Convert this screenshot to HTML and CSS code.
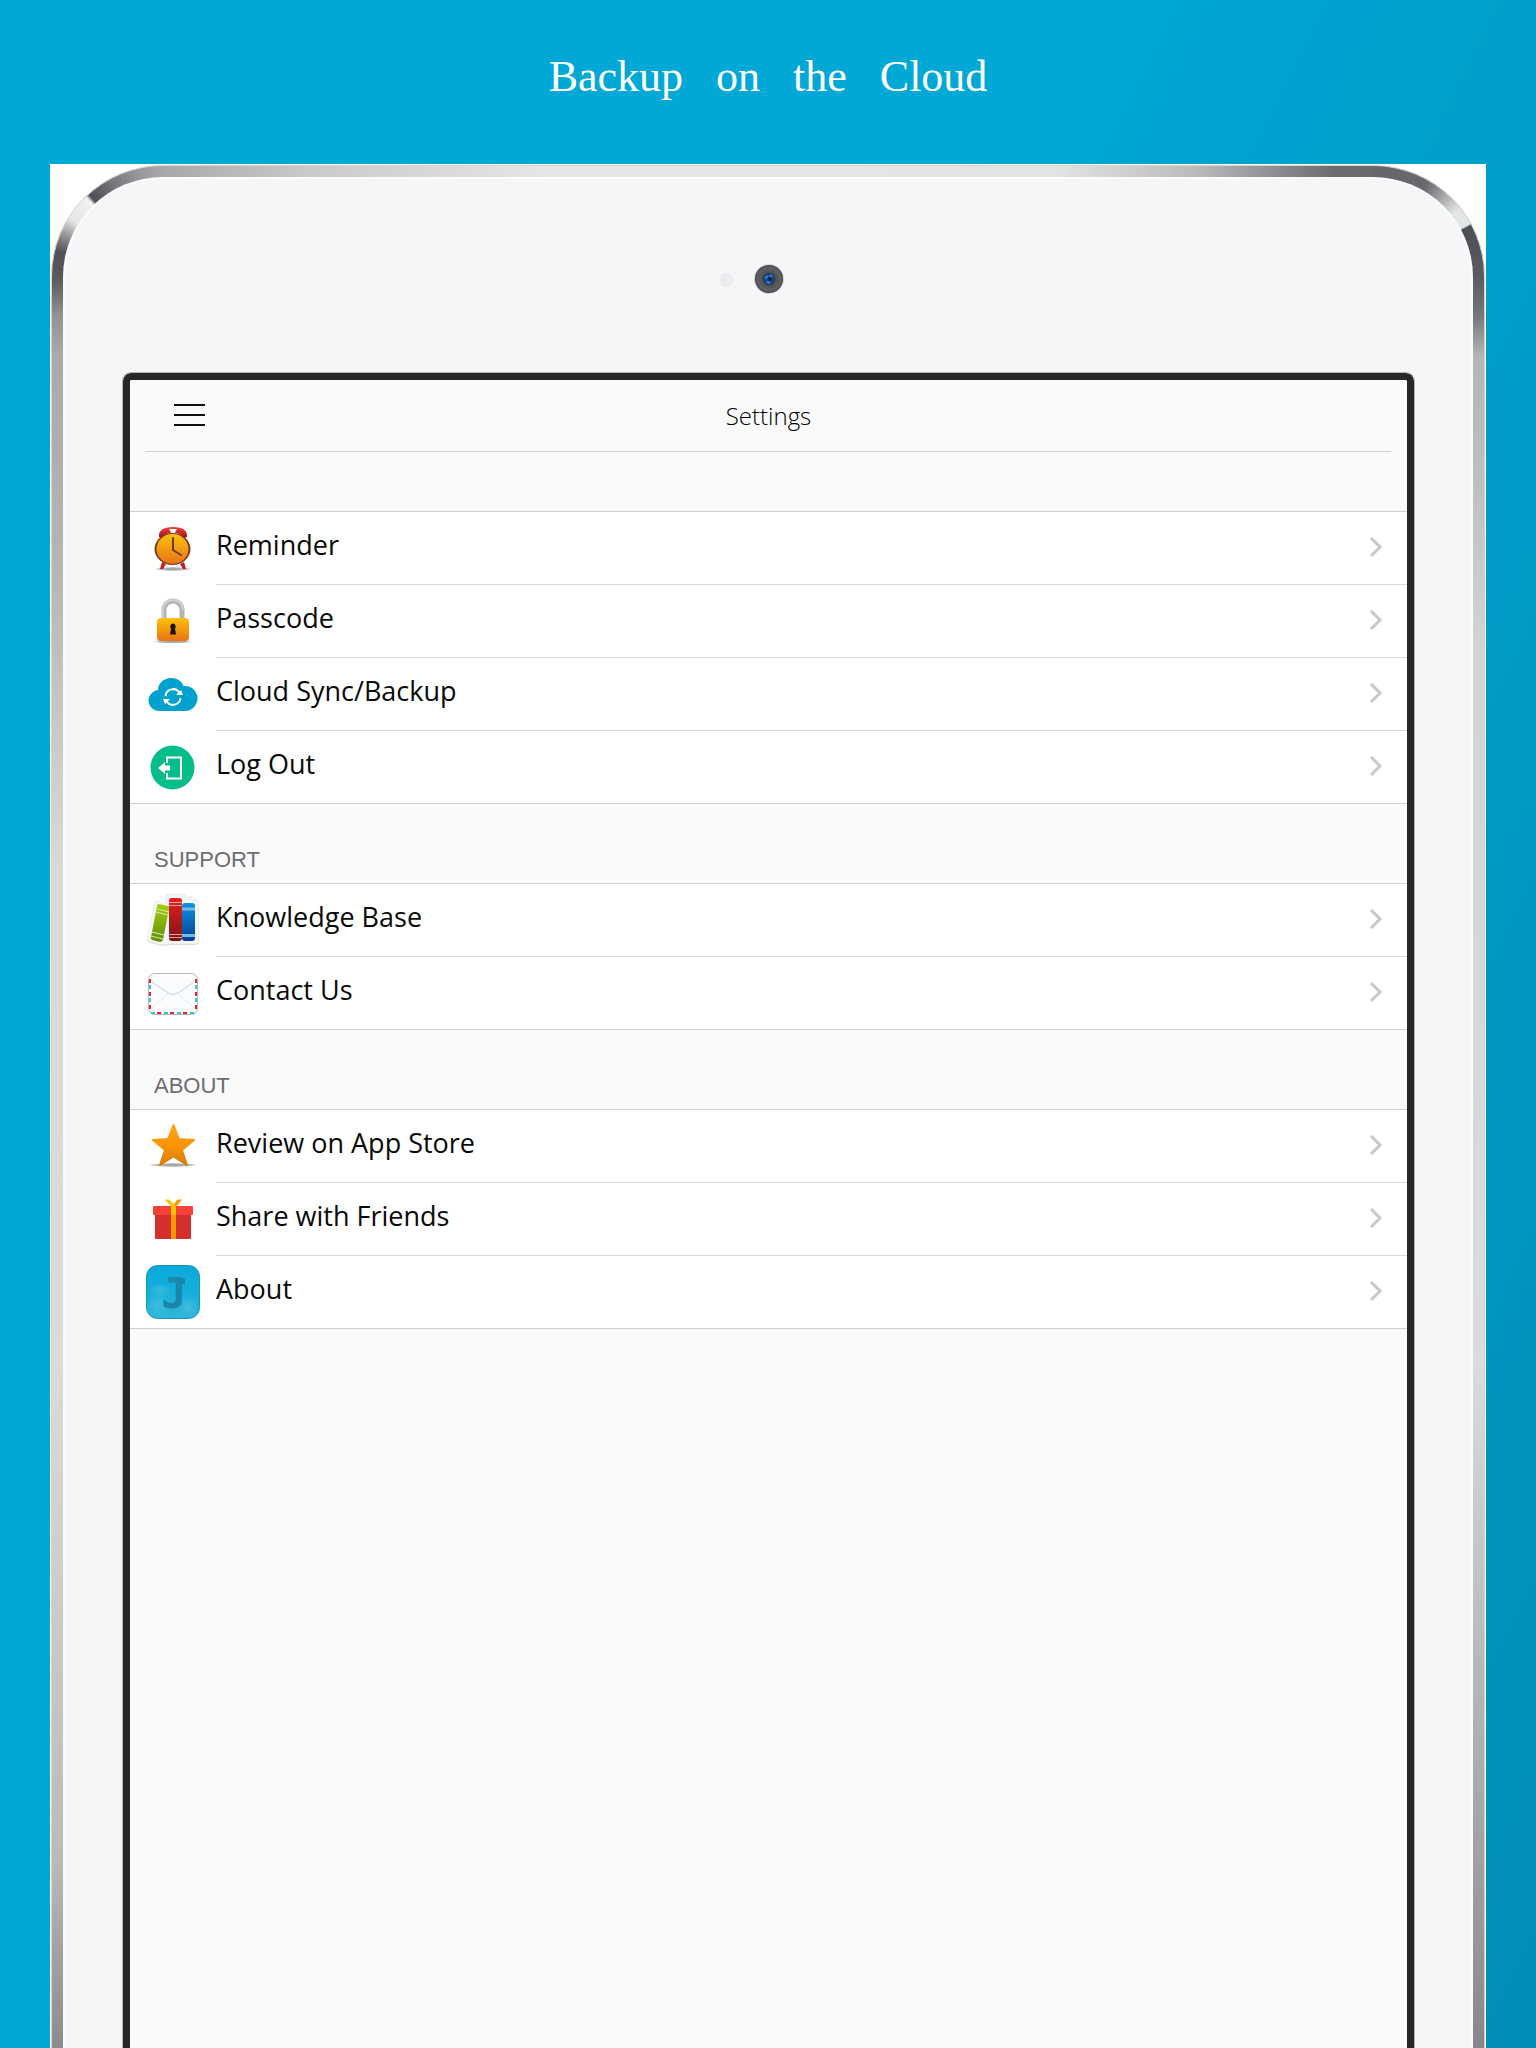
FILE: index.html
```html
<!DOCTYPE html>
<html lang="en">
<head>
<meta charset="utf-8">
<meta name="viewport" content="width=device-width, initial-scale=1">
<title>Backup on the Cloud</title>
<link rel="stylesheet" href="styles.css">
</head>
<body>
<h1 class="headline">Backup   on   the   Cloud</h1>
<div class="stage">
<div class="device">
<div class="face">
  <div class="forehead">
    <svg class="camera" viewBox="0 0 120 32" aria-hidden="true">
      <defs>
        <radialGradient id="lens"><stop offset="0" stop-color="#0a2a4a"/><stop offset=".2" stop-color="#0b58b8"/><stop offset=".36" stop-color="#26364f"/><stop offset=".5" stop-color="#505256"/><stop offset=".85" stop-color="#606164"/><stop offset="1" stop-color="#3e3f42"/></radialGradient>
      </defs>
      <circle cx="17" cy="17" r="7" fill="#e9eaec"/>
      <path d="M12 14h10M11 17h12M12 20h10" stroke="#f3f4f5" stroke-dasharray="2 2"/>
      <circle cx="60" cy="16" r="15" fill="#d4d5d7"/>
      <circle cx="60" cy="16" r="14" fill="url(#lens)"/>
      <path d="M56 15l3-2M61 12l2 2M58 19l3 1" stroke="#1f8bf0" stroke-width="2"/>
      <circle cx="61" cy="16" r="2" fill="#062038"/>
    </svg>
  </div>
  <main class="screen">
    <header class="bar">
      <button class="menu" type="button" aria-label="Menu">
        <svg width="31" height="24" viewBox="0 0 31 24" aria-hidden="true"><path d="M0 2h31M0 12h31M0 22h31" stroke="#111" stroke-width="2"/></svg>
      </button>
      <h2 class="title">Settings</h2>
    </header>

    <ul class="list list-first">
      <li><a class="row" href="#reminder">
        <svg class="icon" viewBox="0 0 60 72" aria-hidden="true">
          <defs>
            <linearGradient id="gold" x2="0" y2="1"><stop offset="0" stop-color="#fbc20a"/><stop offset="1" stop-color="#ea7317"/></linearGradient>
            <linearGradient id="bell" x2="0" y2="1"><stop offset="0" stop-color="#e8453c"/><stop offset="1" stop-color="#a80f12"/></linearGradient>
            <radialGradient id="ground"><stop offset="0" stop-color="#9a9a9a"/><stop offset=".7" stop-color="#b9b9b9"/><stop offset="1" stop-color="#fff"/></radialGradient>
          </defs>
          <ellipse cx="30" cy="57" rx="19" ry="2" fill="url(#ground)"/>
          <path d="M19 50l4 2-3 5h-3zM41 50l-4 2 3 5h3z" fill="#c81d1f"/>
          <path d="M16 25c-1-6 4-10 14-10s15 4 14 10l-3 1c-2-3-6-5-9-5l1-4h-6l1 4c-3 0-7 2-9 5z" fill="url(#bell)"/>
          <path d="M26 17h8l-3 4v2h-2v-2z" fill="#fff"/>
          <ellipse cx="29.500" cy="37" rx="18" ry="16" fill="#77392a"/>
          <ellipse cx="29.500" cy="37" rx="16" ry="15" fill="url(#gold)"/>
          <path d="M30 26v12l8 5" fill="none" stroke="#713b22" stroke-width="2" stroke-linecap="round" stroke-linejoin="round"/>
        </svg>
        <span class="cell"><span class="label">Reminder</span><svg class="chevron" viewBox="0 0 14 22" aria-hidden="true"><path d="M2 1l9 9-9 9"/></svg></span></a></li>
      <li><a class="row" href="#passcode">
        <svg class="icon" viewBox="0 0 60 72" aria-hidden="true">
          <ellipse cx="30" cy="56.500" rx="20" ry="2" fill="url(#ground)"/>
          <path d="M21 34v-9a9 9 0 0 1 18 0v9" fill="none" stroke="#b3b4b5" stroke-width="5"/>
          <path d="M20 33v-8a10 10 0 0 1 20 0" fill="none" stroke="#cdcecf" stroke-width="2"/>
          <rect x="14" y="33" width="32" height="23" rx="4" fill="url(#gold)"/>
          <path d="M30 38.500a3 3 0 0 1 2 5l1 6h-6l1-6a3 3 0 0 1 2-5z" fill="#1d1208"/>
        </svg>
        <span class="cell"><span class="label">Passcode</span><svg class="chevron" viewBox="0 0 14 22" aria-hidden="true"><path d="M2 1l9 9-9 9"/></svg></span></a></li>
      <li><a class="row" href="#sync">
        <svg class="icon" viewBox="0 0 60 72" aria-hidden="true">
          <path d="M17 53C10 53 5.500 48 5.500 42.500c0-5 4-9.500 9.500-10.500 0-7 6-12 13-12 6 0 11 3 12.500 8C48 27 54.500 33 54.500 40S49 53 42 53z" fill="#02a2d0"/>
          <path d="M22.500 38a7.500 7.500 0 0 1 14-3M37.500 40a7.500 7.500 0 0 1-14 3" fill="none" stroke="#fff" stroke-width="2"/>
          <path d="M33 37h7l-2-5zM27 41h-7l2 5z" fill="#fff"/>
        </svg>
        <span class="cell"><span class="label">Cloud Sync/Backup</span><svg class="chevron" viewBox="0 0 14 22" aria-hidden="true"><path d="M2 1l9 9-9 9"/></svg></span></a></li>
      <li><a class="row" href="#logout">
        <svg class="icon" viewBox="0 0 60 72" aria-hidden="true">
          <circle cx="29.500" cy="36.500" r="22" fill="#05bd8b"/>
          <path d="M24 32v-5.500h14v21H24V42" fill="none" stroke="#fff" stroke-width="2"/>
          <path d="M15 37l7-6v3.500h5v5h-5V43z" fill="#fff"/>
        </svg>
        <span class="cell"><span class="label">Log Out</span><svg class="chevron" viewBox="0 0 14 22" aria-hidden="true"><path d="M2 1l9 9-9 9"/></svg></span></a></li>
    </ul>

    <h3 class="group">SUPPORT</h3>
    <ul class="list">
      <li><a class="row" href="#knowledge">
        <svg class="icon" viewBox="0 0 60 72" aria-hidden="true">
          <defs>
            <linearGradient id="green" x2="0" y2="1"><stop offset="0" stop-color="#a6ce10"/><stop offset="1" stop-color="#5e8f0c"/></linearGradient>
            <linearGradient id="red" x2="0" y2="1"><stop offset="0" stop-color="#e51f1d"/><stop offset="1" stop-color="#7d1517"/></linearGradient>
            <linearGradient id="blue" x2="0" y2="1"><stop offset="0" stop-color="#0b93e2"/><stop offset="1" stop-color="#073f94"/></linearGradient>
          </defs>
          <g stroke-linejoin="round">
            <path d="M15 21l11 3V14h13v5h13v38H26l-7 1-11-3z" fill="#dedede" stroke="#dedede" stroke-width="8"/>
            <path d="M15 21l11 3V14h13v5h13v37H26l-7 1-11-3z" fill="#f7f7f7" stroke="#f7f7f7" stroke-width="7"/>
          </g>
          <path d="M16 20l9 2q2 1 1 3l-6 31q-1 2-3 2l-8-2q-2-1-1-3l6-31q0-2 2-2z" fill="url(#green)"/>
          <path d="M14 25l12 3M13 28l12 3M9 48l12 3M8 52l12 3" stroke="#dcecaa"/>
          <rect x="26" y="14" width="13" height="43" rx="3" fill="url(#red)"/>
          <path d="M26 18.500h13M26 21.500h13M26 50.500h13M26 53.500h13" stroke="#f0a5a0"/>
          <rect x="39" y="19" width="13" height="38" rx="3" fill="url(#blue)"/>
          <path d="M39 25h13M39 51.500h13" stroke="#7bb8e6" stroke-width="3"/>
        </svg>
        <span class="cell"><span class="label">Knowledge Base</span><svg class="chevron" viewBox="0 0 14 22" aria-hidden="true"><path d="M2 1l9 9-9 9"/></svg></span></a></li>
      <li><a class="row" href="#contact">
        <svg class="icon" viewBox="0 0 60 72" aria-hidden="true">
          <rect x="5.500" y="16.500" width="49" height="41" rx="6" fill="#fafcfd" stroke="#b4b6b8"/>
          <path d="M7 22v31M53 22v31" stroke="#e3242b" stroke-width="2" stroke-dasharray="4 9"/>
          <path d="M7 28v26M53 28v26" stroke="#3cbfe6" stroke-width="2" stroke-dasharray="4 9"/>
          <path d="M14 56h36" stroke="#e3242b" stroke-width="2" stroke-dasharray="4 9"/>
          <path d="M8 56h46" stroke="#3cbfe6" stroke-width="2" stroke-dasharray="4 9"/>
          <path d="M9 51l16-14M51 51L35 37" stroke="#e3e8ea"/>
          <path d="M9 25l16 11q5 3 10 0l16-11" fill="none" stroke="#c9ced0"/>
        </svg>
        <span class="cell"><span class="label">Contact Us</span><svg class="chevron" viewBox="0 0 14 22" aria-hidden="true"><path d="M2 1l9 9-9 9"/></svg></span></a></li>
    </ul>

    <h3 class="group">ABOUT</h3>
    <ul class="list">
      <li><a class="row" href="#review">
        <svg class="icon" viewBox="0 0 60 72" aria-hidden="true">
          <defs><linearGradient id="star" x2="0" y2="1"><stop offset="0" stop-color="#ffa517"/><stop offset=".5" stop-color="#fb9507"/><stop offset="1" stop-color="#d97d06"/></linearGradient></defs>
          <ellipse cx="30" cy="55" rx="25" ry="2" fill="url(#ground)"/>
          <path d="M30.500 15l5.500 14 15 1-12 10 5 15-13.500-8.500L17 55l5-15-12-10 15-1z" fill="url(#star)" stroke="url(#star)" stroke-width="2" stroke-linejoin="round"/>
        </svg>
        <span class="cell"><span class="label">Review on App Store</span><svg class="chevron" viewBox="0 0 14 22" aria-hidden="true"><path d="M2 1l9 9-9 9"/></svg></span></a></li>
      <li><a class="row" href="#share">
        <svg class="icon" viewBox="0 0 60 72" aria-hidden="true">
          <rect x="12" y="31" width="36" height="25" rx="1" fill="#d32f2f"/>
          <rect x="10" y="23" width="40" height="9" rx="1" fill="#f44336"/>
          <path d="M28 32h5v24h-5z" fill="#ff9800"/>
          <path d="M28 22h5v10h-5z" fill="#ffc107"/>
          <path d="M22 16.500h4l6 6-3 2z" fill="#ffc107"/>
          <path d="M34.500 16.500H39L33 24l-2-3z" fill="#ff9800"/>
        </svg>
        <span class="cell"><span class="label">Share with Friends</span><svg class="chevron" viewBox="0 0 14 22" aria-hidden="true"><path d="M2 1l9 9-9 9"/></svg></span></a></li>
      <li><a class="row" href="#about">
        <svg class="icon" viewBox="0 0 60 72" aria-hidden="true">
          <defs>
            <linearGradient id="tile" x2="0" y2="1"><stop offset="0" stop-color="#0aa9dc"/><stop offset=".55" stop-color="#17afdb"/><stop offset="1" stop-color="#31b6da"/></linearGradient>
            <radialGradient id="haze"><stop offset="0" stop-color="#5cc8e2" stop-opacity=".5"/><stop offset="1" stop-color="#5cc8e2" stop-opacity="0"/></radialGradient>
          </defs>
          <rect x="3.500" y="9.500" width="53" height="53" rx="11" fill="url(#tile)" stroke="#1993bb"/>
          <ellipse cx="15" cy="48" rx="11" ry="13" fill="url(#haze)"/>
          <ellipse cx="45" cy="51" rx="10" ry="10" fill="url(#haze)"/>
          <ellipse cx="17" cy="34" rx="12" ry="7" fill="url(#haze)"/>
          <path d="M34 22h8v6h-8z" fill="#1a86a9"/>
          <text class="glyph" x="31" y="52" text-anchor="middle">J</text>
        </svg>
        <span class="cell"><span class="label">About</span><svg class="chevron" viewBox="0 0 14 22" aria-hidden="true"><path d="M2 1l9 9-9 9"/></svg></span></a></li>
    </ul>
  </main>
</div>
</div>
</div>
</body>
</html>
```
FILE: styles.css
```css
* { box-sizing: border-box; }

body {
  margin: 0;
  min-height: 100vh;
  display: flex;
  flex-direction: column;
  background: linear-gradient(116deg, #00a8d6 41%, #008eb6);
  font-family: "Open Sans", "Noto Sans", sans-serif;
  color: #0a0a0a;
}

.headline {
  margin: 0;
  height: 164px;
  padding-top: 52px;
  font: 400 44px/50px "Liberation Serif", serif;
  color: #fff;
  text-align: center;
  white-space: pre-wrap;
}

/* White plate behind the tablet */
.stage {
  flex: 1;
  display: flex;
  margin: 0 50px;
  padding: 1px 1px 0;
  background: #fff;
}

/* Brushed metal rim: two corners, then top, left and right edges */
.device {
  flex: 1;
  display: flex;
  padding: 11px 11px 0;
  border: 1px solid #d3d4d5;
  border-bottom: 0;
  border-radius: 112px 112px 0 0;
  background:
    conic-gradient(from 270deg at 100% 100%, #59595f 0deg, #505057 14deg, #98999b 24deg, #e3e6e4 32deg, #f0f3f1 46deg, #4e4e55 48deg, #77777c 62deg, #98989c 76deg, #a8a9ab 90deg) left top / 112px 112px no-repeat,
    conic-gradient(from 0deg at 0 100%, #65656b 0deg, #68686e 30deg, #b6b8b8 44deg, #e2e6e4 52deg, #e2e6e4 61deg, #4c4c53 62deg, #5c5c62 90deg) right top / 112px 112px no-repeat,
    linear-gradient(90deg, #a8a9ab 112px, #c8cacb 260px, #e6e7e7 500px, #e3e4e4 70%, #b9babb 80%, #6b6b72 calc(100% - 150px), #65656b) left top / 100% 16px no-repeat,
    linear-gradient(#59595f 112px, #929297 150px, #a9aaad 190px, #b4b5b7 400px, #d8d9da 700px, #dadbdc 1200px, #b9babc 90%, #8b8a90) left top / 16px 100% no-repeat,
    linear-gradient(#5c5c62 112px, #76767c 150px, #b4b5b7 190px, #bcbdbf 300px, #d2d3d4 480px, #dadbdc 1200px, #a1a1a5 90%, #87868c) right top / 16px 100% no-repeat,
    #ccc;
}

.face {
  flex: 1;
  min-width: 0;
  display: flex;
  flex-direction: column;
  padding: 0 57px 0 58px;
  border: 2px solid #fcfcfd;
  border-bottom: 0;
  border-radius: 100px 100px 0 0;
  background: #f4f6f8;
}

.forehead {
  height: 194px;
  display: flex;
  justify-content: center;
  align-items: flex-start;
  padding-top: 84px;
}

.camera { width: 120px; height: 32px; }

.screen {
  flex: 1;
  border: 7px solid #272727;
  border-bottom: 0;
  border-radius: 8px 8px 0 0;
  outline: 1px solid #b4b5b7;
  background: linear-gradient(#fafafa, #fafafa) padding-box, #272727;
}

.bar {
  display: grid;
  grid-template-columns: 1fr auto 1fr;
  align-items: center;
  height: 72px;
  margin: 0 16px;
  border-bottom: 1px solid #cfcfd0;
}

.menu {
  justify-self: start;
  display: flex;
  margin: 0;
  padding: 0 28px 2px;
  border: 0;
  background: none;
}

.title {
  margin: 0;
  font-weight: 300;
  font-size: 24px;
  line-height: 32px;
  color: #000;
}

.list {
  margin: 0;
  padding: 0;
  list-style: none;
  border: solid #d0d0d2;
  border-width: 1px 0;
  background: #fff;
}

.list-first { margin-top: 59px; }

.row {
  display: flex;
  gap: 13px;
  padding-left: 13px;
  color: inherit;
  text-decoration: none;
}

.icon { width: 60px; height: 72px; flex: none; }

.cell {
  flex: 1;
  display: flex;
  justify-content: space-between;
  align-items: center;
  height: 73px;
  padding-right: 24px;
  border-bottom: 1px solid #d6d6d9;
}

li:last-child .cell { height: 72px; border-bottom: 0; }

.label {
  padding-bottom: 6px;
  font-size: 27px;
  line-height: 36px;
}

.chevron {
  width: 14px;
  height: 22px;
  fill: none;
  stroke: #c7c7cc;
  stroke-width: 3;
}

.group {
  margin: 0;
  height: 79px;
  padding: 42px 24px 0;
  font: 400 22px/28px "Liberation Sans", sans-serif;
  color: #6d6d72;
}

.glyph {
  font: 700 42px "DejaVu Sans Mono", monospace;
  fill: #1a86a9;
}
```
